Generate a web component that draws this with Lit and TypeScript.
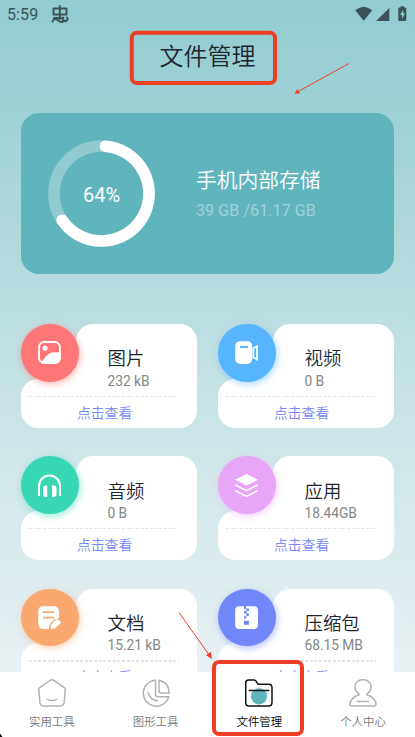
import { LitElement, html, svg, css } from "lit";
import { customElement, property } from "lit/decorators.js";

const tileIcons: Record<string, unknown> = {
  image: svg`
    <rect x="1" y="1" width="21" height="21" rx="5.2" fill="none" stroke="#fff" stroke-width="1.8"/>
    <circle cx="7" cy="7.3" r="2.5" fill="#fff"/>
    <path d="M3 21.5C7 17 8.500 14 12 12.300C15.500 10.600 18.500 11.500 22.500 11.500V18A5 5 0 0 1 18 22.500H5Z" fill="#fff"/>`,
  video: svg`
    <path fill-rule="evenodd" d="M5 0.300H12.500A5 5 0 0 1 17.300 5V18A5 5 0 0 1 12.500 23H5A5 5 0 0 1 0.200 18V5A5 5 0 0 1 5 0.300ZM5 5V6.900H13V5Z" fill="#fff"/>
    <path d="M18.300 7.500L22 5V18.800L18.300 16Z" fill="none" stroke="#fff" stroke-width="1.700" stroke-linejoin="round"/>`,
  audio: svg`
    <path d="M1 22V12.200A10.500 10.800 0 0 1 22 12.200V22" fill="none" stroke="#fff" stroke-width="2"/>
    <path d="M5 14.500A3 3 0 0 1 8 11.500H9.200V23H8A3 3 0 0 1 5 20ZM18.600 14.500A3 3 0 0 0 15.600 11.500H14V23H15.600A3 3 0 0 0 18.600 20Z" fill="#fff"/>`,
  apps: svg`
    <path d="M11.500 0L23 5.700L11.500 11.600L0 5.700Z" fill="#fff"/>
    <path d="M0.300 11L11.500 16.700L22.700 11M0.300 16.700L11.500 22.400L22.700 16.700" fill="none" stroke="#fff" stroke-width="1.500"/>`,
  doc: svg`
    <path fill-rule="evenodd" d="M5 0.200H16A5 5 0 0 1 21 5.200V12C16 13 11 16 11 23H5A5 5 0 0 1 0.200 18V5A5 5 0 0 1 5 0.200ZM5 5.300V7H16.300V5.300ZM5 10.700V12.400H16.300V10.700Z" fill="#fff"/>
    <path d="M13 22.800L12.800 18.500L18.300 13.400Q19.200 12.600 20.200 13.400L22.500 15.500Q23.300 16.500 22.400 17.400L17 22.200Q16.300 22.800 15 22.800Z" fill="#fff"/>`,
  zip: svg`
    <path d="M4 0.300H9V3H11V0.300H19A4 4 0 0 1 23 4.300V19A4 4 0 0 1 19 23H4A4 4 0 0 1 0.200 19V4.300A4 4 0 0 1 4 0.300Z" fill="#fff"/>
    <path d="M11.200 2.500H13.900V5H11.200ZM9 5H11.500V7.500H9ZM11.200 7.600H13.900V10H11.200ZM9 10.200H11.500V12.600H9ZM9 14.800H13.900V18.800H9Z" fill="#6f87f8"/>`,
};

const navIcons: Record<string, unknown> = {
  tools: svg`
    <path d="M12 1.500Q14 .2 16 1.500L26 8.300Q27.800 9.500 27.200 11.700L26 24Q25.500 27.100 22.500 27.100H5.500Q2.500 27.100 2 24L.9 11.700Q.2 9.500 2 8.300Z"/>
    <path d="M9.400 20.300Q14 22.900 18.600 20.300"/>`,
  charts: svg`
    <path d="M13.500 1.200A13 13 0 1 0 26.800 17.700H15.800Q13.500 17.700 13.500 15.500Z"/>
    <path d="M17 1.200V11.800Q17 13.900 19 13.900H27.300Q26.700 3 17 1.200Z"/>
    <path d="M6.300 13.700Q7.500 20.700 15.300 21.700"/>`,
  files: svg`
    <circle cx="14" cy="17.300" r="8.100" fill="#60b5bd" stroke="none"/>
    <path d="M3.500 1H9.200Q10.200 1 11 2.200L13 5.200H23.500Q27 5.200 27 8.700V23.500Q27 27 23.500 27H4Q.7 27 .7 23.500V3.800Q.7 1 3.500 1Z"/>
    <path d="M4.200 11.500H23.800"/>`,
  user: svg`
    <path d="M10.500 15.500C2.500 9.500 6 .8 14 .8S25.500 9.500 17.500 15.500Q26.900 19 27 25Q27.100 27 25 27H3Q.9 27 1 25Q1.100 19 10.500 15.500Z"/>
    <path d="M8.500 22.500H19.500"/>`,
};

@customElement("file-tile")
class FileTile extends LitElement {
  @property() icon = "";
  @property() label = "";
  @property() size = "";

  static styles = css`
    :host { display: block; position: relative; height: 104px; }
    .upper { height: 70px; margin-left: 55px; background: #fff; border-radius: 17px 17px 0 0; box-sizing: border-box; padding: 23.400px 0 0 31.500px; }
    .lower { height: 49.500px; margin-top: -15.500px; box-sizing: border-box; padding-top: 17.300px; background: #fff; border-radius: 17px; border-top-right-radius: 0; }
    .name { font-weight: 350; font-size: 18.400px; line-height: 24px; color: #20242d; white-space: nowrap; }
    .size { font-size: 13.800px; line-height: 18px; margin-top: .5px; color: #858585; letter-spacing: -.05px; white-space: nowrap; }
    .rule { height: 1.300px; margin: 0 18px 0 8px; background: repeating-linear-gradient(90deg, #e3e5e5 0 3px, transparent 3px 4.650px); }
    .open { margin: 5.500px 0 0 56px; font-weight: 350; font-size: 13.800px; line-height: 20px; color: #7688f4; white-space: nowrap; }
    .fill { position: absolute; left: 44px; top: 44px; width: 12px; height: 12px; background: #fff; }
    .disc { position: absolute; left: 0; top: 0; width: 57.500px; height: 57.500px; border-radius: 50%; display: grid; place-items: center; }
    .disc svg { width: 23px; height: 23px; overflow: visible; }
    .image { background: #ff7676; box-shadow: 1px 2px 7px #ff76768c; }
    .video { background: #57b4ff; box-shadow: 1px 2px 7px #57b4ff8c; }
    .audio { background: #38d7b3; box-shadow: 1px 2px 7px #38d7b38c; }
    .apps { background: #e9a5f8; box-shadow: 1px 2px 7px #e9a5f88c; }
    .doc { background: #f9a870; box-shadow: 1px 2px 7px #f9a8708c; }
    .zip { background: #6f87f8; box-shadow: 1px 2px 7px #6f87f88c; }
  `;

  render() {
    return html`
      <div class="upper">
        <div class="name">${this.label}</div>
        <div class="size">${this.size}</div>
      </div>
      <div class="lower">
        <div class="rule"></div>
        <div class="open">点击查看</div>
      </div>
      <div class="fill"></div>
      <div class="disc ${this.icon}">
        <svg viewBox="0 0 23 23">${tileIcons[this.icon]}</svg>
      </div>`;
  }
}

const tiles = [
  ["image", "图片", "232 kB"],
  ["video", "视频", "0 B"],
  ["audio", "音频", "0 B"],
  ["apps", "应用", "18.44GB"],
  ["doc", "文档", "15.21 kB"],
  ["zip", "压缩包", "68.15 MB"],
];

const tabs = [
  ["tools", "实用工具"],
  ["charts", "图形工具"],
  ["files", "文件管理"],
  ["user", "个人中心"],
];

@customElement("app-root")
class AppRoot extends LitElement {
  static styles = css`
    :host {
      display: flex; flex-direction: column; position: relative; width: 415px; height: 737px; overflow: hidden;
      font-family: Roboto, "Noto Sans CJK SC", sans-serif;
      background: linear-gradient(#91ccd0 0, #9ed2d5 110px, #badde0 300px, #cde5e8 440px, #e9f1f4 672px);
    }
    .status { height: 28px; flex: none; display: flex; align-items: center; box-sizing: border-box; padding: 0 8px 0 7px; color: #3b5356; }
    .clock { font-size: 16px; line-height: 28px; width: 44px; padding-top: 1px; letter-spacing: .1px; }
    .bug { width: 18px; height: 20px; }
    .signals { margin-left: auto; width: 52px; height: 16px; }
    h1 { margin: 11px 0 0; text-align: center; font-weight: 350; font-size: 24px; line-height: 36px; color: #20242d; flex: none; }
    .storage { flex: none; margin: 38px 21px 0; height: 161px; border-radius: 18px; background: #60b5bd; display: flex; align-items: center; }
    .gauge { width: 107px; height: 107px; margin-left: 27px; display: grid; }
    .gauge > * { grid-area: 1 / 1; }
    .percent { place-self: center; font-size: 20px; color: #fff; line-height: 24px; padding-top: 2px; }
    .info { margin-left: 41px; padding-top: 1px; }
    .heading { font-weight: 350; font-size: 20.750px; line-height: 28px; color: #fff; white-space: nowrap; }
    .usage { font-size: 16px; line-height: 22px; margin-top: 5px; color: #a3d2d6; letter-spacing: .1px; white-space: nowrap; }
    .grid { flex: 1; min-height: 0; overflow: hidden; display: grid; grid-template-columns: 176px 176px; grid-auto-rows: 104px; gap: 28.300px 21px; padding: 50px 21px 0; align-content: start; }
    nav { flex: none; height: 65px; background: #fff; display: grid; grid-template-columns: repeat(4, 1fr); }
    .tab { display: flex; flex-direction: column; align-items: center; padding-top: 7px; color: #777; font-weight: 350; font-size: 11.400px; line-height: 16px; gap: 7px; }
    .tab svg { width: 28px; height: 28px; fill: none; stroke: #b2b2b2; stroke-width: 1.500; stroke-linejoin: round; stroke-linecap: round; }
    .tab.current { color: #000; }
    .tab.current svg { stroke: #111; }
    .marks { position: absolute; inset: 0; pointer-events: none; }
  `;

  render() {
    return html`
      <div class="status">
        <span class="clock">5:59</span>
        <svg class="bug" viewBox="0 0 18 20" fill="none" stroke="#3b5356" stroke-width="1.900" stroke-linejoin="round" stroke-linecap="round">
          <path d="M2.500 4.500H15.500V10.500H2.500ZM8.800 2V15M1.500 17.500C2.500 14.500 5 14.500 6.800 16.200C9 18.500 11.500 18.500 13.300 16.500"/>
          <path d="M12.300 13.500A2.300 2.300 0 1 0 16 13.500M3 14H11"/>
        </svg>
        <svg class="signals" viewBox="0 0 52 16" fill="#3b5356">
          <path d="M.3 4.200Q8.700-2.800 17.200 4.200L8.700 14.700Z"/>
          <path d="M34.300 2V15H21Z"/>
          <path fill-rule="evenodd" d="M45.500 1.500V.3H49V1.500H50.300Q51.300 1.500 51.300 2.500V14Q51.300 15 50.300 15H44.300Q43.300 15 43.300 14V2.500Q43.300 1.500 44.300 1.500ZM48.200 3.800L45 9H47V12.700L50 7.300H48.200Z"/>
        </svg>
      </div>
      <h1>文件管理</h1>
      <section class="storage">
        <div class="gauge">
          <svg viewBox="0 0 107 107" fill="none" stroke-width="11.600">
            <circle cx="53.500" cy="53.500" r="47.500" stroke="#90cbd0"/>
            <path d="M57.500 6.200A47.500 47.500 0 1 1 14.200 80.200" stroke="#fff" stroke-linecap="round"/>
          </svg>
          <span class="percent">64%</span>
        </div>
        <div class="info">
          <div class="heading">手机内部存储</div>
          <div class="usage">39 GB /61.17 GB</div>
        </div>
      </section>
      <main class="grid">
        ${tiles.map(([icon, label, size]) => html`<file-tile .icon=${icon} .label=${label} .size=${size}></file-tile>`)}
      </main>
      <nav>
        ${tabs.map(([icon, label]) => html`
          <div class="tab ${icon === "files" ? "current" : ""}">
            <svg viewBox="0 0 28 28">${navIcons[icon]}</svg>
            <span>${label}</span>
          </div>`)}
      </nav>
      <svg class="marks" width="415" height="737" viewBox="0 0 415 737" fill="none" stroke="#ee3f26">
        <rect x="131.800" y="32.800" width="143.200" height="50.200" rx="5" stroke-width="4"/>
        <rect x="214" y="662" width="88" height="72" rx="5" stroke-width="4"/>
        <path d="M349 63.500L298 91.500M179 612.500L208.500 654" stroke-width="1"/>
        <path d="M294.500 93.800L297.300 89L300 93.400ZM212 659L206 655.300L210.800 651.800Z" fill="#ee3f26" stroke="none"/>
        <path d="M0 733.500L2.500 737H0Z" fill="#111" stroke="none"/>
      </svg>`;
  }
}
